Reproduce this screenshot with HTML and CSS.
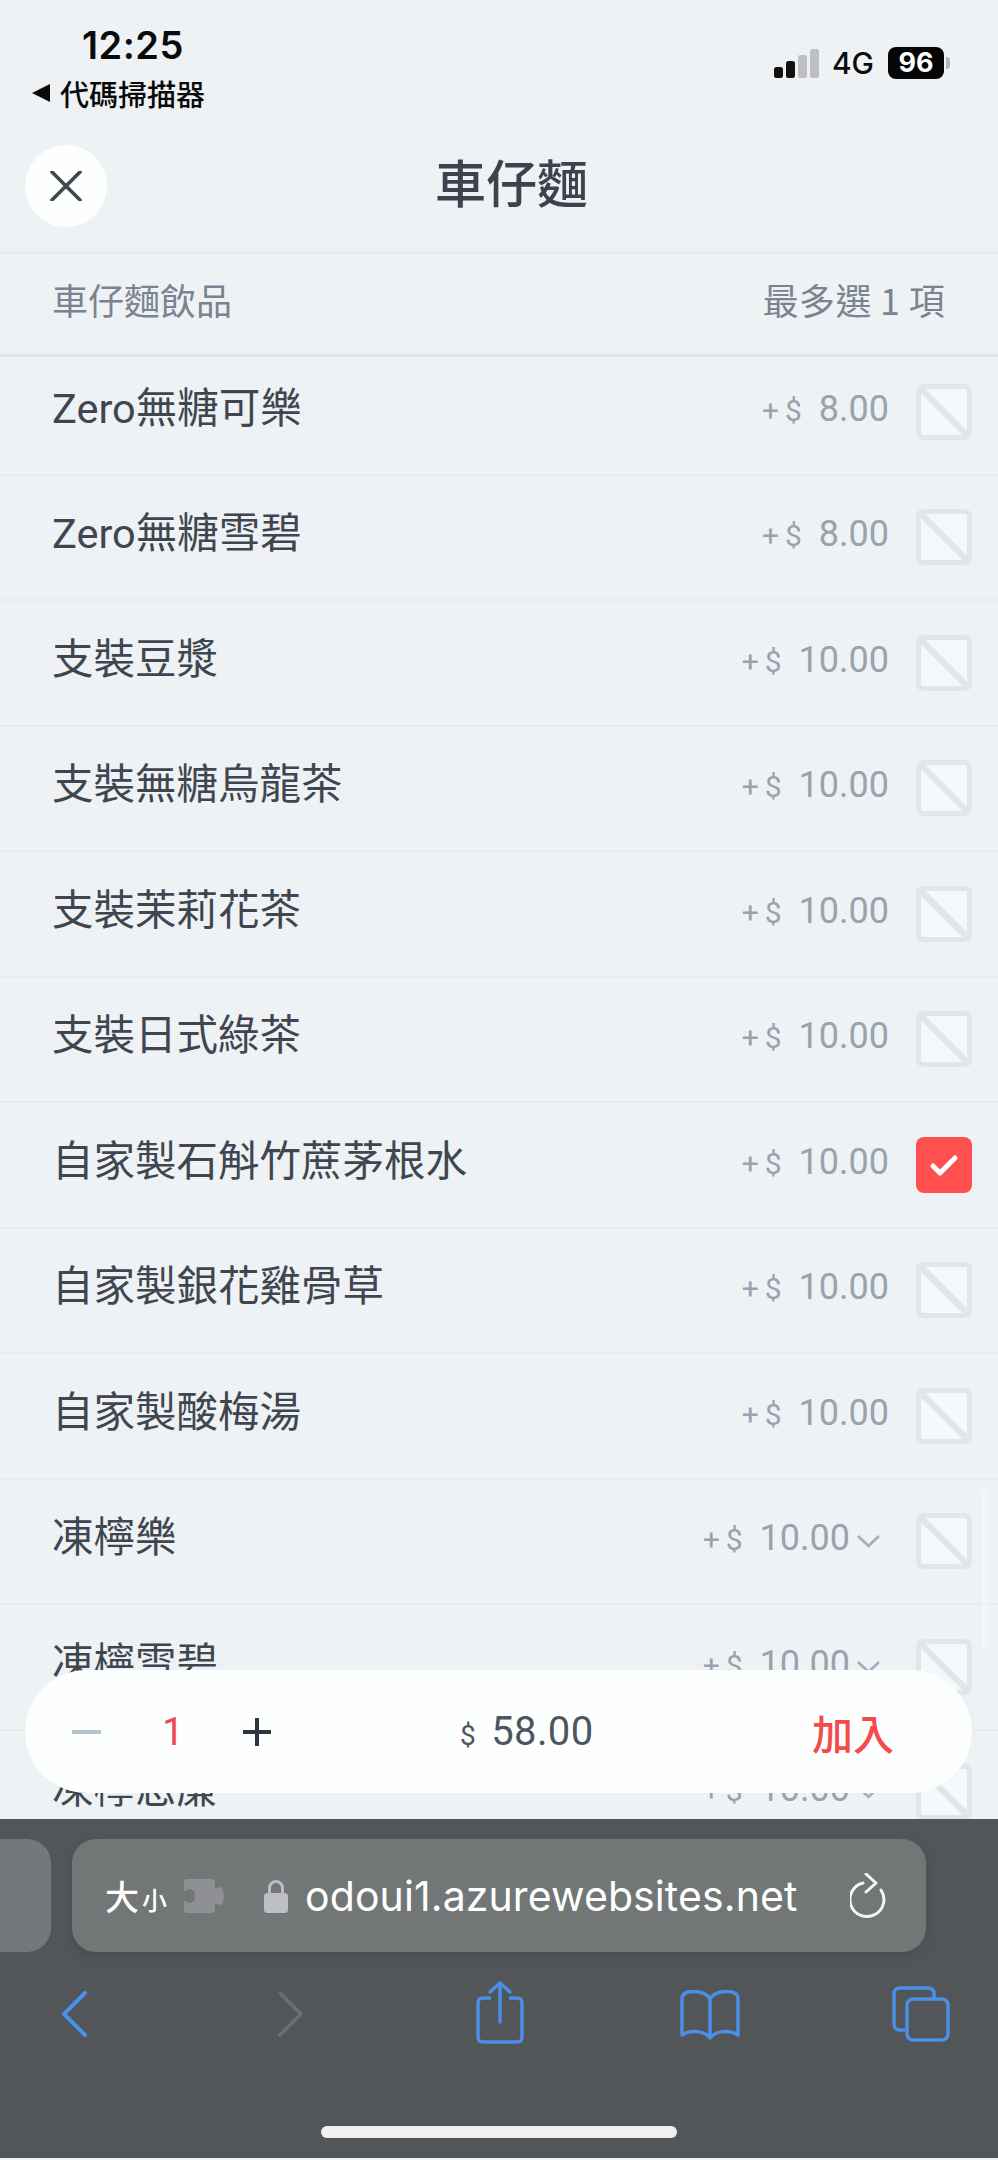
FILE: index.html
```html
<!DOCTYPE html>
<html lang="zh-Hant">
  <head>
    <meta charset="utf-8">
    <meta name="viewport" content="width=device-width, initial-scale=1.0">
    <title>車仔麵</title>
    <link rel="stylesheet" href="styles.css">
  </head>
  <body>
    <div class="screen">
      <div class="status">
        <div class="status-left">
          <div class="time">12:25</div>
          <div class="back-app"><span class="back-arrow"></span>代碼掃描器</div>
        </div>
        <div class="status-right">
          <svg class="signal" width="45" height="29" viewBox="0 0 45 29">
            <rect x="0" y="18" width="9" height="11" rx="2.5" fill="#111"/>
            <rect x="12" y="12" width="9" height="17" rx="2.5" fill="#111"/>
            <rect x="24" y="6" width="9" height="23" rx="2.5" fill="#bdbfc2"/>
            <rect x="36" y="0" width="9" height="29" rx="2.5" fill="#bdbfc2"/>
          </svg>
          <span class="net">4G</span>
          <span class="battery">96</span>
          <span class="battery-nub"></span>
        </div>
      </div>

      <div class="header">
        <button class="close" type="button">
          <svg width="32" height="30" viewBox="0 0 32 30"><path d="M2 1 30 29M30 1 2 29" stroke="#41474f" stroke-width="3.6" stroke-linecap="round" fill="none"/></svg>
        </button>
        <h1 class="title">車仔麵</h1>
      </div>

      <div class="section">
        <span>車仔麵飲品</span>
        <span class="section-limit">最多選 1 項</span>
      </div>

      <div class="list">
        <div class="row"><span class="name">Zero無糖可樂</span><span class="price"><span class="sign">+$</span>8.00</span><span class="check"></span></div>
        <div class="row"><span class="name">Zero無糖雪碧</span><span class="price"><span class="sign">+$</span>8.00</span><span class="check"></span></div>
        <div class="row"><span class="name">支裝豆漿</span><span class="price"><span class="sign">+$</span>10.00</span><span class="check"></span></div>
        <div class="row"><span class="name">支裝無糖烏龍茶</span><span class="price"><span class="sign">+$</span>10.00</span><span class="check"></span></div>
        <div class="row"><span class="name">支裝茉莉花茶</span><span class="price"><span class="sign">+$</span>10.00</span><span class="check"></span></div>
        <div class="row"><span class="name">支裝日式綠茶</span><span class="price"><span class="sign">+$</span>10.00</span><span class="check"></span></div>
        <div class="row"><span class="name">自家製石斛竹蔗茅根水</span><span class="price"><span class="sign">+$</span>10.00</span>
          <span class="check checked"><svg width="30" height="24" viewBox="0 0 30 24"><path d="M4 13 11 20 26 5" stroke="#fff" stroke-width="5" stroke-linecap="round" stroke-linejoin="round" fill="none"/></svg></span>
        </div>
        <div class="row"><span class="name">自家製銀花雞骨草</span><span class="price"><span class="sign">+$</span>10.00</span><span class="check"></span></div>
        <div class="row"><span class="name">自家製酸梅湯</span><span class="price"><span class="sign">+$</span>10.00</span><span class="check"></span></div>
        <div class="row has-options"><span class="name">凍檸樂</span><span class="price"><span class="sign">+$</span>10.00</span><svg class="chevron" width="25" height="14" viewBox="0 0 25 14"><path d="M2 2 12.5 12 23 2" stroke="#a6adb8" stroke-width="2.6" fill="none"/></svg><span class="check"></span></div>
        <div class="row has-options"><span class="name">凍檸雪碧</span><span class="price"><span class="sign">+$</span>10.00</span><svg class="chevron" width="25" height="14" viewBox="0 0 25 14"><path d="M2 2 12.5 12 23 2" stroke="#a6adb8" stroke-width="2.6" fill="none"/></svg><span class="check"></span></div>
        <div class="row has-options"><span class="name">凍檸忌廉</span><span class="price"><span class="sign">+$</span>10.00</span><svg class="chevron" width="25" height="14" viewBox="0 0 25 14"><path d="M2 2 12.5 12 23 2" stroke="#a6adb8" stroke-width="2.6" fill="none"/></svg><span class="check"></span></div>
        <div class="scroll-thumb"></div>
      </div>

      <div class="cart">
        <span class="minus"></span>
        <span class="qty">1</span>
        <svg class="plus" width="28" height="28" viewBox="0 0 28 28"><path d="M14 0V28M0 14H28" stroke="#2f3540" stroke-width="4"/></svg>
        <span class="total"><span class="total-sign">$</span>58.00</span>
        <span class="add">加入</span>
      </div>

      <div class="browser">
        <div class="address-row">
          <div class="prev-tab"></div>
          <div class="address">
            <span class="size-big">大</span><span class="size-small">小</span>
            <svg class="puzzle" width="40" height="34" viewBox="0 0 40 34">
              <path d="M3 0H28Q31 0 31 3V10Q33 8 35 8 40 8 40 17 40 26 35 26 33 26 31 24V31Q31 34 28 34H3Q0 34 0 31V21Q3 24 6 24 11 24 11 17 11 10 6 10 3 10 0 13V3Q0 0 3 0Z" fill="#8e9093"/>
            </svg>
            <svg class="lock" width="24" height="34" viewBox="0 0 24 34">
              <path d="M5.5 15V9A6.5 6.5 0 0 1 18.5 9V15" stroke="#bdbdc4" stroke-width="3" fill="none"/>
              <rect x="0" y="14" width="24" height="20" rx="3.5" fill="#bdbdc4"/>
            </svg>
            <span class="url">odoui1.azurewebsites.net</span>
            <svg class="reload" width="38" height="46" viewBox="0 0 38 46">
              <path d="M13 10A17 17 0 1 0 31 17" stroke="#f4f5f5" stroke-width="3" fill="none" stroke-linecap="round"/>
              <path d="M16 1 26 10 16 19" stroke="#f4f5f5" stroke-width="3" fill="none" stroke-linecap="round" stroke-linejoin="round"/>
            </svg>
          </div>
        </div>
        <div class="toolbar">
          <svg class="tool-back" width="26" height="46" viewBox="0 0 26 46"><path d="M24 2 3 23 24 44" stroke="#4a90e8" stroke-width="4" fill="none" stroke-linecap="round" stroke-linejoin="round"/></svg>
          <svg class="tool-forward" width="26" height="46" viewBox="0 0 26 46"><path d="M2 2 23 23 2 44" stroke="#6c6f72" stroke-width="3.6" fill="none" stroke-linecap="round" stroke-linejoin="round"/></svg>
          <svg class="tool-share" width="48" height="63" viewBox="0 0 48 63">
            <path d="M15 17H7Q2 17 2 22V56Q2 61 7 61H41Q46 61 46 56V22Q46 17 41 17H33" stroke="#4a90e8" stroke-width="3.4" fill="none"/>
            <path d="M24 41V2M14 11 24 2 34 11" stroke="#4a90e8" stroke-width="3.4" fill="none" stroke-linecap="round" stroke-linejoin="round"/>
          </svg>
          <svg class="tool-book" width="60" height="50" viewBox="0 0 60 50">
            <path d="M30 9C26 2 16 1 8 2 4 3 2 5 2 9V45C10 40 24 40 30 48 36 40 50 40 58 45V9C58 5 56 3 52 2 44 1 34 2 30 9ZM30 9V46" stroke="#4a90e8" stroke-width="3.4" fill="none" stroke-linejoin="round"/>
          </svg>
          <svg class="tool-tabs" width="58" height="56" viewBox="0 0 58 56">
            <path d="M13 44H8Q2 44 2 38V8Q2 2 8 2H36Q42 2 42 8V12" stroke="#4a90e8" stroke-width="3.4" fill="none"/>
            <rect x="15" y="13" width="41" height="41" rx="6" stroke="#4a90e8" stroke-width="3.4" fill="none"/>
          </svg>
        </div>
        <div class="home-bar"></div>
      </div>
    </div>
  </body>
</html>
```

FILE: styles.css
```css
* {
  box-sizing: border-box;
}

html, body {
  margin: 0;
  padding: 0;
}

body {
  font-family: "Roboto", "Noto Sans CJK TC", sans-serif;
  color: #3f4650;
  background: #eef2f5;
}

.screen {
  position: relative;
  width: 998px;
  height: 2160px;
  overflow: hidden;
  display: flex;
  flex-direction: column;
  background: #eef2f5;
}

/* status bar */
.status {
  height: 128px;
  flex: none;
  display: flex;
  justify-content: space-between;
  padding: 24px 48px 0 32px;
  color: #0a0a0a;
}

.time {
  margin-left: 50px;
  font-family: "Inter", sans-serif;
  font-size: 38px;
  font-weight: 600;
  line-height: 42px;
  letter-spacing: 0.5px;
}

.back-app {
  display: flex;
  align-items: center;
  margin-top: 10px;
  font-family: "Noto Sans CJK TC", sans-serif;
  font-size: 29px;
  font-weight: 500;
  line-height: 34px;
}

.back-arrow {
  width: 0;
  height: 0;
  margin-right: 10px;
  border-top: 9px solid transparent;
  border-bottom: 9px solid transparent;
  border-right: 18px solid #0a0a0a;
}

.status-right {
  display: flex;
  align-items: center;
  height: 32px;
  margin-top: 23px;
}

.signal {
  margin-right: 13px;
}

.net {
  font-family: "Inter", sans-serif;
  font-size: 30px;
  font-weight: 500;
  margin-right: 14px;
}

.battery {
  width: 56px;
  height: 32px;
  border-radius: 8px;
  background: #050505;
  color: #fff;
  font-family: "Inter", sans-serif;
  font-size: 27px;
  font-weight: 700;
  line-height: 32px;
  text-align: center;
}

.battery-nub {
  width: 4px;
  height: 12px;
  margin-left: 2px;
  border-radius: 0 3px 3px 0;
  background: #b4b6b9;
}

/* header */
.header {
  height: 126px;
  flex: none;
  display: flex;
  align-items: center;
  padding: 0 0 8px 25px;
  border-bottom: 3px solid #e6eaee;
}

.close {
  width: 82px;
  height: 82px;
  flex: none;
  display: flex;
  align-items: center;
  justify-content: center;
  padding: 0;
  border: none;
  border-radius: 50%;
  background: #fdfefe;
}

.title {
  margin: 0 0 10px 328px;
  font-family: "Noto Sans CJK TC", sans-serif;
  font-size: 51px;
  font-weight: 500;
  line-height: 60px;
  color: #3c434d;
}

/* section heading */
.section {
  height: 103px;
  flex: none;
  display: flex;
  align-items: center;
  justify-content: space-between;
  padding: 0 53px 10px 52px;
  border-bottom: 3px solid #e1e5ea;
  font-family: "Noto Sans CJK TC", sans-serif;
  font-size: 36px;
  color: #7a838f;
}

.section-limit {
  letter-spacing: 0.3px;
}

/* option rows */
.list {
  position: relative;
  flex: 1;
  overflow: hidden;
  margin-top: -7px;
}

.row {
  height: 125.5px;
  display: flex;
  align-items: center;
  padding: 0 26px 0 52px;
  border-bottom: 2px solid #e8ecf0;
}

.name {
  flex: 1;
  margin-bottom: 14px;
  font-family: "Roboto", "Noto Sans CJK TC", sans-serif;
  font-size: 41.5px;
  color: #3f4650;
}

.price {
  margin: 0 27px 6px 0;
  font-family: "Roboto", sans-serif;
  font-size: 36px;
  color: #9aa2ae;
}

.sign {
  margin-right: 11px;
  font-size: 30px;
  letter-spacing: 6px;
}

.has-options .price {
  margin-right: 6px;
}

.chevron {
  margin-right: 35px;
}

.check {
  width: 56px;
  height: 56px;
  flex: none;
  display: flex;
  align-items: center;
  justify-content: center;
  border: 5px solid #e2e6ea;
  border-radius: 7px;
  background: linear-gradient(to top right, #f5f8fa calc(50% - 3px), #e2e6ea calc(50% - 3px), #e2e6ea calc(50% + 3px), #f5f8fa calc(50% + 3px));
}

.check.checked {
  border: none;
  border-radius: 8px;
  background: #ff4f4f;
}

.scroll-thumb {
  position: absolute;
  right: 10px;
  top: 1140px;
  width: 6px;
  height: 160px;
  border-radius: 3px;
  background: rgba(255, 255, 255, 0.35);
}

/* floating cart pill */
.cart {
  position: absolute;
  left: 25px;
  top: 1670px;
  width: 947px;
  height: 123px;
  display: flex;
  align-items: center;
  border-radius: 62px;
  background: #fdfefe;
}

.minus {
  width: 29px;
  height: 4px;
  margin-left: 47px;
  background: #b5c4d1;
}

.qty {
  width: 30px;
  margin-left: 57px;
  font-family: "Roboto", sans-serif;
  font-size: 38px;
  text-align: center;
  color: #f2474d;
}

.plus {
  margin-left: 55px;
}

.total {
  margin-left: 189px;
  font-family: "Roboto", sans-serif;
  font-size: 40px;
  letter-spacing: 0.4px;
  color: #4d5561;
}

.total-sign {
  margin-right: 15px;
  font-size: 28px;
}

.add {
  margin-left: auto;
  margin-right: 78px;
  font-family: "Noto Sans CJK TC", sans-serif;
  font-size: 41px;
  font-weight: 500;
  color: #f44a4a;
}

/* safari chrome */
.browser {
  height: 339px;
  flex: none;
  margin-bottom: 2px;
  background: #535658;
}

.address-row {
  display: flex;
  gap: 21px;
  padding-top: 20px;
  margin-left: -40px;
}

.prev-tab {
  width: 91px;
  height: 113px;
  border-radius: 24px;
  background: #74787a;
}

.address {
  width: 854px;
  height: 113px;
  display: flex;
  align-items: center;
  padding-left: 33px;
  border-radius: 24px;
  background: #727676;
  box-shadow: 0 4px 14px rgba(0, 0, 0, 0.12);
  color: #fff;
}

.size-big {
  font-family: "Noto Sans CJK TC", sans-serif;
  font-size: 34px;
  font-weight: 500;
}

.size-small {
  margin-left: 3px;
  margin-top: 6px;
  font-family: "Noto Sans CJK TC", sans-serif;
  font-size: 25px;
  font-weight: 500;
}

.puzzle {
  margin-left: 17px;
}

.lock {
  margin-left: 40px;
}

.url {
  width: 492px;
  margin-left: 17px;
  font-family: "Inter", sans-serif;
  font-size: 41px;
  letter-spacing: 0.1px;
  white-space: nowrap;
}

.reload {
  margin-left: 53px;
}

.toolbar {
  display: flex;
  align-items: flex-start;
  height: 174px;
  padding-top: 36px;
}

.tool-back {
  margin-left: 61px;
  margin-top: 3px;
}

.tool-forward {
  margin-left: 191px;
  margin-top: 3px;
}

.tool-share {
  margin-left: 172px;
  margin-top: -7px;
}

.tool-book {
  margin-left: 156px;
  margin-top: 2px;
}

.tool-tabs {
  margin-left: 152px;
  margin-top: -2px;
}

.home-bar {
  width: 356px;
  height: 12px;
  margin-left: 321px;
  border-radius: 6px;
  background: #f0f0f0;
}
```
